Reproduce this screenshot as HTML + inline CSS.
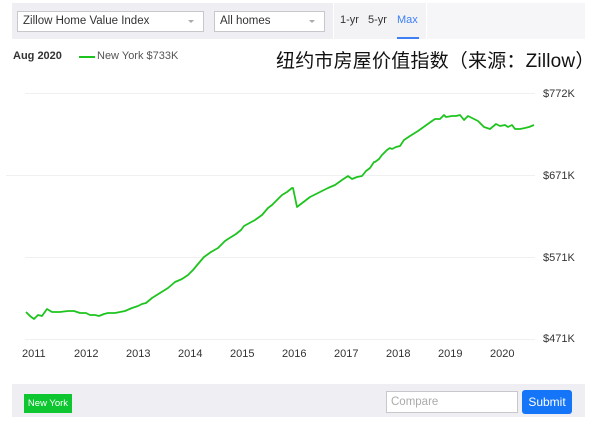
<!DOCTYPE html>
<html><head><meta charset="utf-8"><style>
body{margin:0;width:600px;height:426px;background:#fff;font-family:"Liberation Sans","Noto Sans CJK SC",sans-serif;position:relative;overflow:hidden}
.abs{position:absolute}
.sel{position:absolute;top:11px;height:21px;background:#fff;border:1px solid #c8c8cc;font-size:11.5px;color:#333;line-height:19px;padding-left:5px;box-sizing:border-box}
.sel:after{content:"";position:absolute;right:9px;top:8px;border:3px solid transparent;border-top:3px solid #aaa}
.ax{position:absolute;font-size:11px;color:#333}
</style></head><body>
<div class="abs" style="left:12px;top:3px;width:321px;height:36px;background:#efeff3"></div>
<div class="abs" style="left:334px;top:3px;width:92px;height:36px;background:#f3f3f6"></div>
<div class="abs" style="left:427px;top:3px;width:158px;height:36px;background:#f6f6f8"></div>
<div class="sel" style="left:17px;width:187px">Zillow Home Value Index</div>
<div class="sel" style="left:214px;width:111px">All homes</div>
<div class="abs" style="left:340px;top:14px;font-size:11px;color:#333">1-yr</div>
<div class="abs" style="left:368px;top:14px;font-size:11px;color:#333">5-yr</div>
<div class="abs" style="left:397px;top:14px;font-size:11px;color:#3d7ff5">Max</div>
<div class="abs" style="left:397px;top:37px;width:22px;height:2px;background:#3d7ff5"></div>
<div class="abs" style="left:13px;top:50px;font-size:11px;font-weight:bold;color:#333">Aug 2020</div>
<div class="abs" style="left:79px;top:56px;width:16px;height:1.5px;background:#1ec41e"></div>
<div class="abs" style="left:97px;top:50px;font-size:11px;color:#555">New York $733K</div>
<div class="abs" style="left:276px;top:46px;font-size:19px;color:#111;white-space:nowrap;letter-spacing:0.2px">纽约市房屋价值指数（来源：Zillow）</div>
<svg class="abs" style="left:0;top:0" width="600" height="426">
<g stroke="#f0f0f3" stroke-width="1"><line x1="25" y1="93.5" x2="535" y2="93.5"/><line x1="6" y1="175.5" x2="535" y2="175.5"/><line x1="25" y1="257.5" x2="535" y2="257.5"/><line x1="25" y1="339.5" x2="535" y2="339.5"/></g>
<polyline fill="none" stroke="#1ec41e" stroke-width="1.8" stroke-linejoin="round" points="26,312 30,316 34,319 38,315 42,316 47,309 52,312 60,312 68,311 74,311 80,313 86,313 90,315 95,315 99,316 104,314 108,313 115,313 125,311 132,308 138,306 142,304 146,303 152,298 160,293 168,288 175,282 182,279 188,275 193,270 198,264 204,257 211,252 218,248 225,241 228,239 236,234 241,230 244,226 255,220 262,215 268,208 272,205 278,199 282,195 287,192 292,188 293,188 297,207 310,197 320,192 328,188 335,185 342,180 348,176 352,179 357,177 362,176 366,171 370,168 374,162 375,162 379,159 382,155 387,150 390,148 392,149 396,147 400,146 404,140 410,136 418,131 425,126 432,121 435,119 440,119 444,115 446,117 452,116 456,116 460,115 464,120 468,116 472,118 478,121 484,127 490,129 496,124 500,126 505,125 508,127 512,125 515,129 520,129 525,128 529,127 534,125"/>
</svg>
<div class="ax" style="left:543px;top:88px">$772K</div>
<div class="ax" style="left:543px;top:170px">$671K</div>
<div class="ax" style="left:543px;top:252px">$571K</div>
<div class="ax" style="left:543px;top:333px">$471K</div>
<div class="ax" style="left:22px;top:348px">2011</div><div class="ax" style="left:74px;top:348px">2012</div><div class="ax" style="left:126px;top:348px">2013</div><div class="ax" style="left:178px;top:348px">2014</div><div class="ax" style="left:230px;top:348px">2015</div><div class="ax" style="left:282px;top:348px">2016</div><div class="ax" style="left:334px;top:348px">2017</div><div class="ax" style="left:386px;top:348px">2018</div><div class="ax" style="left:438px;top:348px">2019</div><div class="ax" style="left:490px;top:348px">2020</div>
<div class="abs" style="left:12px;top:384px;width:573px;height:33px;background:#efeff3"></div>
<div class="abs" style="left:24px;top:394px;width:48px;height:19px;background:#0dc630;color:#fff;font-size:9.5px;line-height:19px;text-align:center">New York</div>
<div class="abs" style="left:386px;top:391px;width:132px;height:22px;background:#fff;border:1px solid #c8c8cc;box-sizing:border-box;font-size:11.5px;color:#aaa;line-height:20px;padding-left:4px">Compare</div>
<div class="abs" style="left:522px;top:390px;width:50px;height:24px;background:#1575f8;border-radius:3px;color:#fff;font-size:12px;line-height:24px;text-align:center">Submit</div>
</body></html>
